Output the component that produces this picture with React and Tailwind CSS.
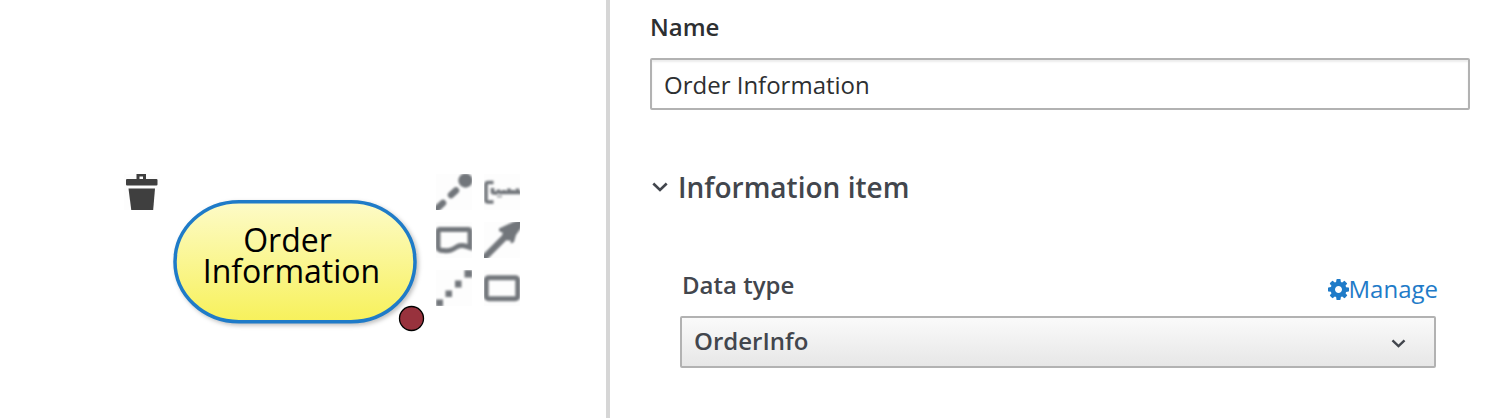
import React from "react";

const SANS = "font-['Open_Sans','Noto_Sans',sans-serif]";

function ToolIcon({ children }) {
  return (
    <div className="h-9 w-9 overflow-hidden bg-[#fdfdfd] text-[#72767b]">
      <svg className="h-9 w-9 overflow-visible blur-[1px]" viewBox="0 0 36 36" fill="none" stroke="currentColor">
        {children}
      </svg>
    </div>
  );
}

function Toolbox() {
  return (
    <div className="absolute left-[436px] top-[174px] grid grid-cols-2 gap-3">
      <ToolIcon>
        <circle cx="29.500" cy="6.500" r="7.200" fill="currentColor" stroke="none" />
        <path d="M15 21 20 16.500M1 34.500 7 29" strokeWidth="6.500" strokeLinecap="round" />
      </ToolIcon>
      <ToolIcon>
        <path d="M9.500 8.500H4Q2 8.500 2 10.500V26Q2 28 4 28H9.500" strokeWidth="3.600" />
        <path d="M8.500 14v4q0 1 2 1h3M14.500 15.500v4M15 18.500h22M20 16v3M25 14.500v5M29 16v3M33.500 14.500v5" strokeWidth="3.600" />
        <path d="M13 22.500h5" strokeWidth="2" opacity="0.6" />
      </ToolIcon>
      <ToolIcon>
        <path d="M2 9.500Q2 7.500 4 7.500H32Q34 7.500 34 9.500V25.500C29 24 26 22 21.500 24.500C16 28 13 29.500 8 28.500Q2 28.500 2 25Z" strokeWidth="5" />
      </ToolIcon>
      <ToolIcon>
        <path d="M-1 37 22 14" strokeWidth="6.500" />
        <path d="M39 -3 29 0 15 6.500 15 9 19 11 18 13 24 19 26 18 27 21.500 30 20 32 13 37 6Z" fill="currentColor" stroke="none" />
      </ToolIcon>
      <ToolIcon>
        <path d="M28.500 0h8v7.500h-8zM19 10.500h6.500v7h-6.500zM9.500 20.500h6.500v6.500h-6.500zM0 29.500h7v7h-7z" fill="currentColor" stroke="none" />
      </ToolIcon>
      <ToolIcon>
        <rect x="2.200" y="7.700" width="31.600" height="21" rx="2.500" strokeWidth="5" />
      </ToolIcon>
    </div>
  );
}

function TrashIcon() {
  return (
    <div className="absolute left-[124px] top-[174px] h-9 w-9 overflow-hidden bg-[#fdfdfd] text-[#3f3f3f]">
      <svg className="h-9 w-9 overflow-visible blur-[0.7px]" viewBox="0 0 36 36" fill="currentColor">
        <path d="M12.500 6V-1h9.500v7h-3V2.500h-3.500V6z" />
        <rect x="2" y="5" width="31.500" height="6.500" rx="1" />
        <path d="M4.500 14.500H31L29 38H7.500Z" />
      </svg>
    </div>
  );
}

function InputDataNode() {
  return (
    <div className="absolute left-[173px] top-[200px] h-[123px] w-[244px]">
      <svg className="absolute inset-0 h-full w-full overflow-visible" viewBox="0 0 244 123">
        <defs>
          <linearGradient id="nodeFill" x1="0" y1="0" x2="0" y2="1">
            <stop offset="0" stopColor="#fdfbc8" />
            <stop offset="1" stopColor="#f7f15b" />
          </linearGradient>
        </defs>
        <rect
          className="drop-shadow-[2px_2px_2px_rgba(0,0,0,0.25)]"
          x="2" y="1.700" width="240" height="120" rx="64" ry="60"
          fill="url(#nodeFill)" stroke="#1f7bc8" strokeWidth="3.500"
        />
      </svg>
      <div className="relative flex flex-col pt-[24px] pr-[15px] text-center text-[32px] leading-[31px] text-black">
        <span>Order</span>
        <span className="pl-[8px]">Information</span>
      </div>
      <svg className="absolute left-[225px] top-[105px] h-[27px] w-[27px]" viewBox="0 0 27 27">
        <circle cx="13.500" cy="13.500" r="12" fill="#98323d" stroke="#000" strokeWidth="1.300" />
      </svg>
    </div>
  );
}

function Chevron({ className }) {
  return (
    <svg className={className} viewBox="0 0 16 10" fill="none" stroke="currentColor" strokeWidth="2.600">
      <path d="M1.300 1.500 8 8 14.700 1.500" />
    </svg>
  );
}

function CogIcon() {
  return (
    <svg className="h-[21px] w-[21px]" viewBox="0 -1408 1536 1536" fill="currentColor">
      <path
        transform="scale(1,-1)"
        fillRule="evenodd"
        d="M1024 640q0 -106 -75 -181t-181 -75t-181 75t-75 181t75 181t181 75t181 -75t75 -181zM1536 749v-222q0 -12 -8 -23t-20 -13l-185 -28q-19 -54 -39 -91q35 -50 107 -138q10 -12 10 -25t-9 -23q-27 -37 -99 -108t-94 -71q-12 0 -26 9l-138 108q-44 -23 -91 -38q-16 -136 -29 -186q-7 -28 -36 -28h-222q-14 0 -24.5 8.5t-11.5 21.5l-28 184q-49 16 -90 37l-141 -107q-10 -9 -25 -9q-14 0 -25 11q-126 114 -165 168q-7 10 -7 23q0 12 8 23q15 21 51 66.5t54 70.5q-27 50 -41 99l-183 27q-13 2 -21 12.5t-8 23.5v222q0 12 8 23t19 13l186 28q14 46 39 92q-40 57 -107 138q-10 12 -10 24q0 10 9 23q26 36 98.5 107.5t94.5 71.5q13 0 26 -10l138 -107q44 23 91 38q16 136 29 186q7 28 36 28h222q14 0 24.5 -8.5t11.5 -21.5l28 -184q49 -16 90 -37l142 107q9 9 24 9q13 0 25 -10q129 -119 165 -170q7 -8 7 -22q0 -12 -8 -23q-15 -21 -51 -66.5t-54 -70.5q26 -50 41 -98l183 -28q13 -2 21 -12.5t8 -23.5z"
      />
    </svg>
  );
}

function PropertiesPanel() {
  return (
    <aside className="flex flex-1 flex-col border-l-4 border-[#d6d6d6] pt-[11px] pr-[26px] pl-10 text-2xl leading-8 text-[#2d2f31]">
      <label className="font-semibold">Name</label>
      <div className="mt-[15px] flex h-[52px] items-center rounded-[2px] border-2 border-[#b2b2b2] px-3 pt-[2px] shadow-[inset_0_2px_2px_rgba(3,3,3,0.075)]">
        Order Information
      </div>

      <h2 className="mt-[57px] flex h-10 items-center text-[28px] leading-10 font-semibold text-[#42464d]">
        <Chevron className="ml-[2px] mr-[10px] h-[10px] w-4" />
        Information item
      </h2>

      <div className="mt-[62px] flex flex-col pr-[34px] pl-[30px] text-[#42464d]">
        <div className="flex h-[47px] items-start justify-between">
          <span className="pl-[2px] font-semibold">Data type</span>
          <a className="mt-1 -mr-[2px] flex items-center text-[#1f7bc8]">
            <CogIcon />
            Manage
          </a>
        </div>
        <div className="flex h-[52px] items-center justify-between rounded-[2px] border-2 border-[#b2b2b2] bg-linear-to-b from-[#fafafa] to-[#e7e7e7] pr-[28px] pl-3 font-semibold">
          <span className="-mt-[2px]">OrderInfo</span>
          <Chevron className="mt-[2px] h-[9px] w-[15px]" />
        </div>
      </div>
    </aside>
  );
}

export default function App() {
  return (
    <div className={`flex h-[418px] w-[1496px] overflow-hidden bg-white ${SANS}`}>
      <main className="relative w-[606px] shrink-0">
        <TrashIcon />
        <InputDataNode />
        <Toolbox />
      </main>
      <PropertiesPanel />
    </div>
  );
}
